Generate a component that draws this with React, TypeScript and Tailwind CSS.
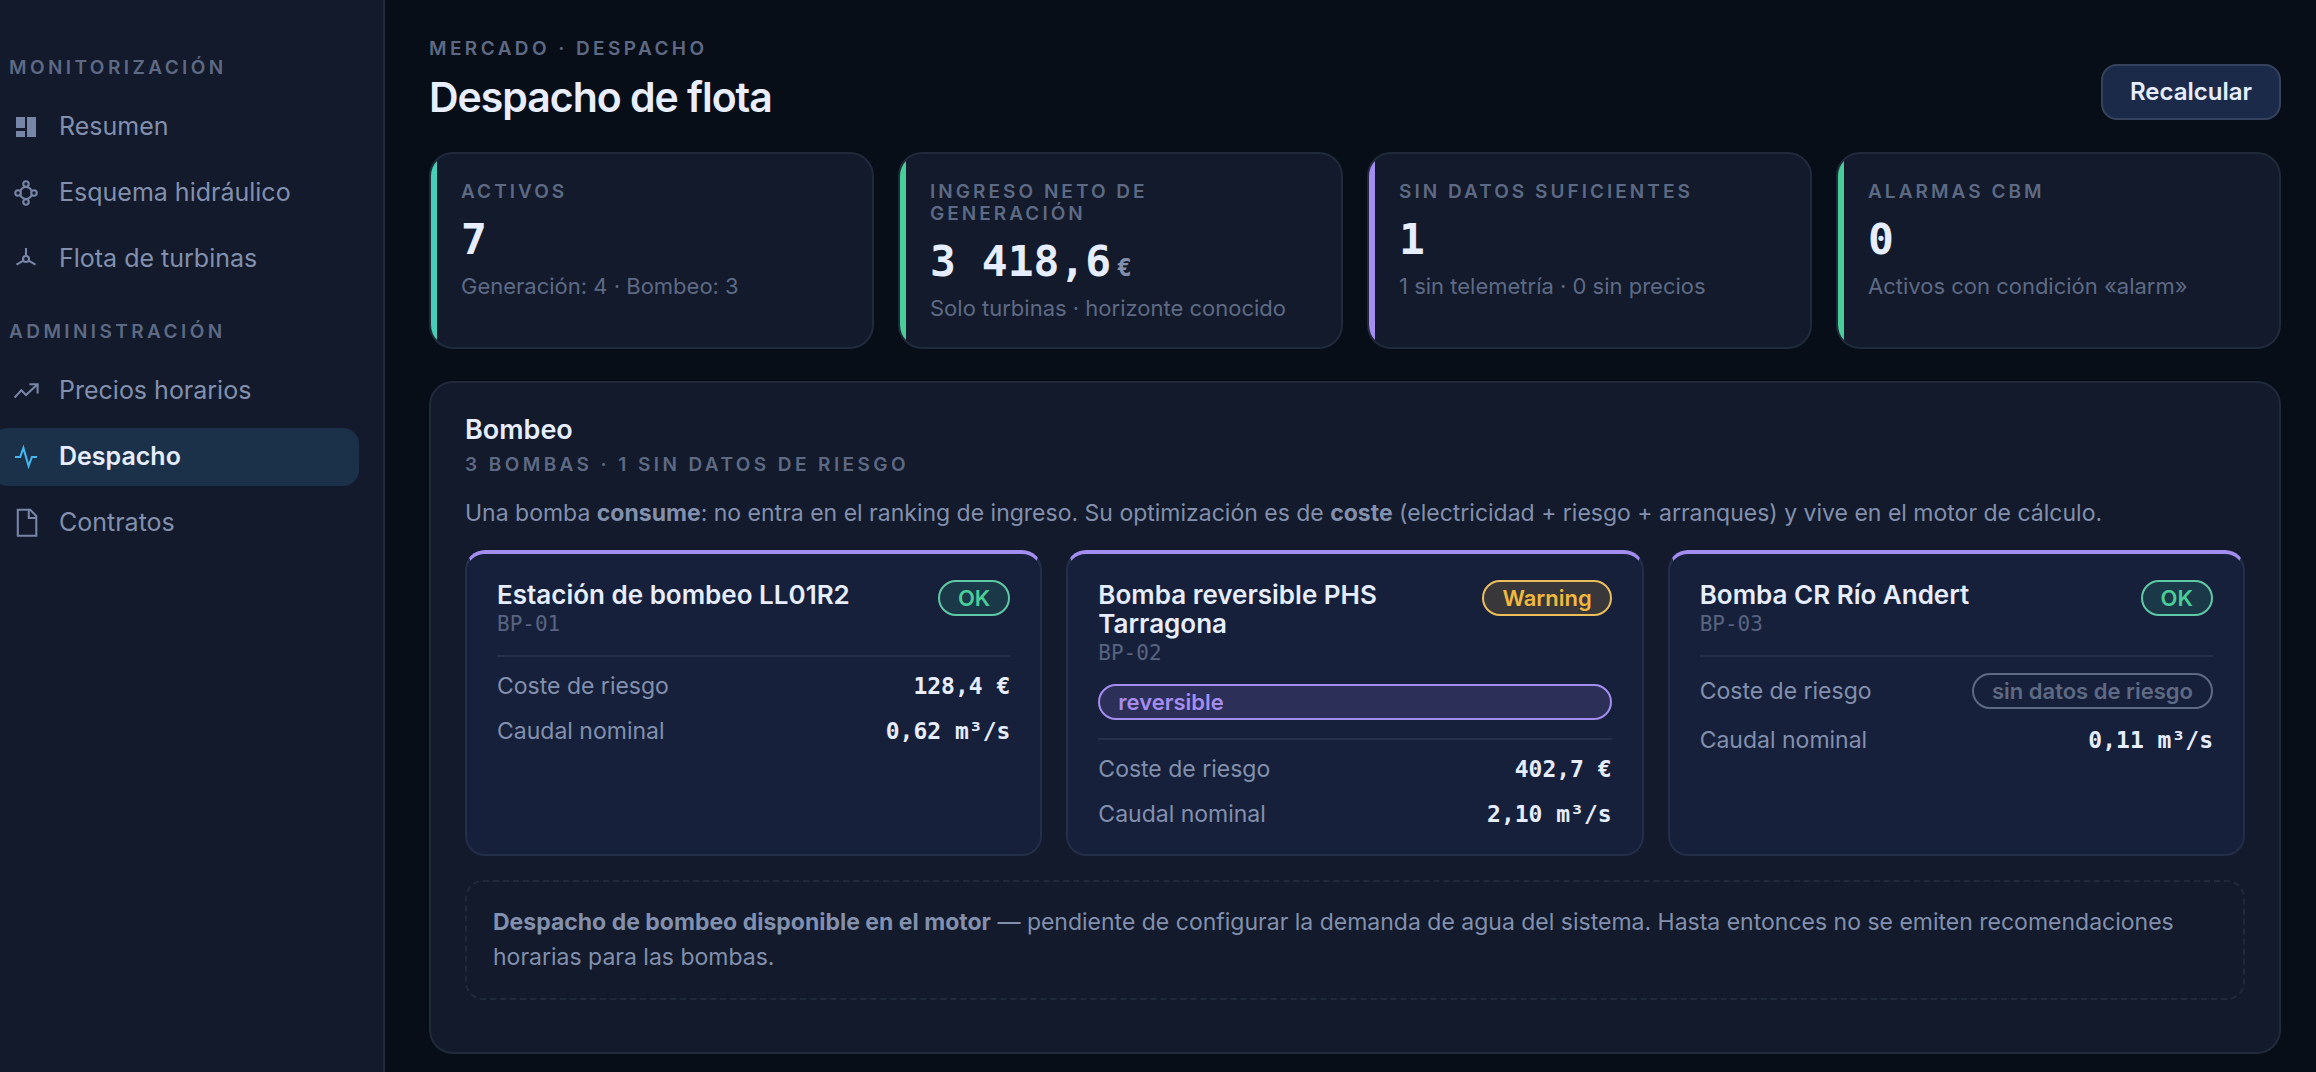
import type { ReactNode } from "react";
import clsx from "clsx";

type NavItem = { label: string; icon: ReactNode; active?: boolean };

const stroke = { fill: "none", stroke: "currentColor", strokeWidth: 2.1 };

const monitoring: NavItem[] = [
  {
    label: "Resumen",
    icon: (
      <g fill="currentColor">
        <path d="M6 6h9v11H6zM6 20h9v6H6zM17 6h9v20h-9z" />
      </g>
    ),
  },
  {
    label: "Esquema hidráulico",
    icon: (
      <g {...stroke}>
        <circle cx="16" cy="16" r="6" />
        <circle cx="16" cy="7" r="2.7" className="fill-[#121a2b]" />
        <circle cx="16" cy="25" r="2.7" className="fill-[#121a2b]" />
        <circle cx="8" cy="16" r="2.7" className="fill-[#121a2b]" />
        <circle cx="24" cy="16" r="2.7" className="fill-[#121a2b]" />
      </g>
    ),
  },
  {
    label: "Flota de turbinas",
    icon: (
      <g {...stroke}>
        <circle cx="16" cy="16" r="3" />
        <path d="M16 13V5M13.4 17.6 6.5 21.7M18.6 17.6l6.9 4.1" />
      </g>
    ),
  },
];

const admin: NavItem[] = [
  {
    label: "Precios horarios",
    icon: (
      <g {...stroke}>
        <path d="M4.6 22.6 11.3 15.3 16 20 27 9.8M19.4 9.3h8.2v9.3" />
      </g>
    ),
  },
  {
    label: "Despacho",
    active: true,
    icon: (
      <g {...stroke}>
        <path d="M5 16h5.2l3.2-9 5.2 18 3.3-9H27" />
      </g>
    ),
  },
  {
    label: "Contratos",
    icon: (
      <g {...stroke}>
        <path d="M7.8 2.8h12.4l6.1 6.2v19.8H7.8zM18.8 2.8V11h7.5" />
      </g>
    ),
  },
];

const kpis = [
  { label: "Activos", value: "7", note: "Generación: 4 · Bombeo: 3", bar: "bg-[#46cfb8]" },
  {
    label: "Ingreso neto de generación",
    value: "3 418,6",
    unit: "€",
    note: "Solo turbinas · horizonte conocido",
    bar: "bg-[#48ce98]",
  },
  { label: "Sin datos suficientes", value: "1", note: "1 sin telemetría · 0 sin precios", bar: "bg-[#a48df0]" },
  { label: "Alarmas CBM", value: "0", note: "Activos con condición «alarm»", bar: "bg-[#48ce98]" },
];

const tones = {
  ok: "border-[#5fc9a6] bg-[#1b3848] text-[#48ce98]",
  warning: "border-[#eabf5c] bg-[#393739] text-[#f2b93f]",
  violet: "border-[#a48df0] bg-[#2c2f57] text-[#a48df0]",
  muted: "border-[#5e6a84] text-[#5e6a84]",
};

type Pump = {
  name: string;
  code: string;
  status: "ok" | "warning";
  statusLabel: string;
  reversible?: boolean;
  risk?: string;
  flow: string;
};

const pumps: Pump[] = [
  { name: "Estación de bombeo LL01R2", code: "BP-01", status: "ok", statusLabel: "OK", risk: "128,4 €", flow: "0,62 m³/s" },
  {
    name: "Bomba reversible PHS Tarragona",
    code: "BP-02",
    status: "warning",
    statusLabel: "Warning",
    reversible: true,
    risk: "402,7 €",
    flow: "2,10 m³/s",
  },
  { name: "Bomba CR Río Andert", code: "BP-03", status: "ok", statusLabel: "OK", flow: "0,11 m³/s" },
];

const label = "text-[19px] leading-[22px] font-semibold uppercase text-[#5e6a84]";

function Pill({ tone, children }: { tone: keyof typeof tones; children: ReactNode }) {
  return (
    <span
      className={clsx(
        "flex h-9 shrink-0 items-center rounded-full border-2 px-[18px] text-[22px] leading-none font-semibold",
        tones[tone],
      )}
    >
      {children}
    </span>
  );
}

function NavGroup({ title, items }: { title: string; items: NavItem[] }) {
  return (
    <section>
      <h2 className={clsx(label, "mb-[19px] pl-[17px] tracking-[0.18em]")}>{title}</h2>
      <ul className="flex flex-col gap-2">
        {items.map((item) => (
          <li key={item.label}>
            <a
              href="#"
              aria-current={item.active ? "page" : undefined}
              className={clsx(
                "flex h-[58px] items-center gap-[17px] rounded-2xl pl-[18px] text-[25px]",
                item.active ? "bg-[#1b3149] font-semibold text-[#e6edff]" : "text-[#8290ae]",
              )}
            >
              <svg
                viewBox="0 0 32 32"
                className={clsx("size-8 shrink-0", item.active ? "text-[#46b6ee]" : "text-[#7785a6]")}
                aria-hidden="true"
              >
                {item.icon}
              </svg>
              {item.label}
            </a>
          </li>
        ))}
      </ul>
    </section>
  );
}

function PumpCard({ pump }: { pump: Pump }) {
  return (
    <article className="flex flex-col gap-[18px] rounded-[20px] border-2 border-t-4 border-[#232e49] border-t-[#a48df0] bg-[#17203a] px-[30px] py-[26px]">
      <div className="flex items-start justify-between gap-4">
        <div>
          <h3 className="text-[26px] leading-[29px] font-semibold text-[#e6edff]">{pump.name}</h3>
          <p className="mt-0.5 font-['DejaVu_Sans_Mono',monospace] text-[21px] leading-[26px] text-[#586480]">{pump.code}</p>
        </div>
        <Pill tone={pump.status}>{pump.statusLabel}</Pill>
      </div>
      {pump.reversible && <Pill tone="violet">reversible</Pill>}
      <dl className="flex flex-col gap-[18px] border-t-2 border-[#263149] pt-4 text-[23px] leading-[27px]">
        <div className="flex items-center justify-between">
          <dt className="text-[#8290ae]">Coste de riesgo</dt>
          <dd className="font-['DejaVu_Sans_Mono',monospace] font-bold text-[#e6edff]">
            {pump.risk ?? (
              <span className="font-[Inter,sans-serif]">
                <Pill tone="muted">sin datos de riesgo</Pill>
              </span>
            )}
          </dd>
        </div>
        <div className="flex items-center justify-between">
          <dt className="text-[#8290ae]">Caudal nominal</dt>
          <dd className="font-['DejaVu_Sans_Mono',monospace] font-bold text-[#e6edff]">{pump.flow}</dd>
        </div>
      </dl>
    </article>
  );
}

export default function App() {
  return (
    <div className="flex min-h-screen bg-[#080e18] font-[Inter,sans-serif]">
      <aside className="w-[385px] shrink-0 overflow-hidden border-r-2 border-[#202839] bg-[#121a2b] pt-[57px] pr-6">
        <nav className="-ml-2 flex flex-col gap-[33px]">
          <NavGroup title="Monitorización" items={monitoring} />
          <NavGroup title="Administración" items={admin} />
        </nav>
      </aside>

      <main className="min-w-0 flex-1 pt-[38px] pr-[35px] pb-[18px] pl-11">
        <header className="mb-8 flex items-end justify-between">
          <div>
            <p className={clsx(label, "tracking-[0.18em]")}>Mercado · Despacho</p>
            <h1 className="mt-[14px] text-[41px] leading-[46px] font-semibold tracking-tight text-[#e9eeff]">Despacho de flota</h1>
          </div>
          <button
            type="button"
            className="h-14 rounded-2xl border-2 border-[#37425f] bg-[#1c2a4a] px-[27px] text-2xl font-semibold text-[#e6edff]"
          >
            Recalcular
          </button>
        </header>

        <section className="mb-8 grid grid-cols-4 gap-6">
          {kpis.map((kpi) => (
            <div key={kpi.label} className="flex overflow-hidden rounded-3xl border-2 border-[#202a3b] bg-[#121a2b]">
              <div className={clsx("w-1.5 shrink-0", kpi.bar)} />
              <div className="pt-[27px] pr-8 pb-[25px] pl-6">
                <h2 className={clsx(label, "tracking-[0.16em]")}>{kpi.label}</h2>
                <p className="mt-[11px] font-['DejaVu_Sans_Mono',monospace] text-[43px] leading-[50px] font-bold text-[#e6edff]">
                  {kpi.value}
                  {kpi.unit && <span className="ml-1.5 text-2xl leading-none text-[#8290ae]">{kpi.unit}</span>}
                </p>
                <p className="mt-2 text-[22px] leading-7 text-[#5e6a84]">{kpi.note}</p>
              </div>
            </div>
          ))}
        </section>

        <section className="rounded-3xl border-2 border-[#202a3b] bg-[#121a2b] p-[34px]">
          <h2 className="text-[27px] leading-[26px] font-semibold text-[#e6edff]">Bombeo</h2>
          <p className={clsx(label, "mt-[11px] tracking-[0.18em]")}>3 bombas · 1 sin datos de riesgo</p>
          <p className="mt-5 text-[23px] leading-[35px] text-[#8290ae]">
            Una bomba <strong className="font-bold">consume</strong>: no entra en el ranking de ingreso. Su optimización es de{" "}
            <strong className="font-bold">coste</strong> (electricidad + riesgo + arranques) y vive en el motor de cálculo.
          </p>
          <div className="mt-[19px] grid grid-cols-3 gap-6">
            {pumps.map((pump) => (
              <PumpCard key={pump.code} pump={pump} />
            ))}
          </div>
          <p className="mt-6 mb-[18px] rounded-[18px] border-2 border-dashed border-[#202a3b] px-[26px] py-[23px] text-[23px] leading-[35px] text-[#8290ae]">
            <strong className="font-bold">Despacho de bombeo disponible en el motor</strong> — pendiente de configurar la demanda de agua
            del sistema. Hasta entonces no se emiten recomendaciones horarias para las bombas.
          </p>
        </section>
      </main>
    </div>
  );
}
